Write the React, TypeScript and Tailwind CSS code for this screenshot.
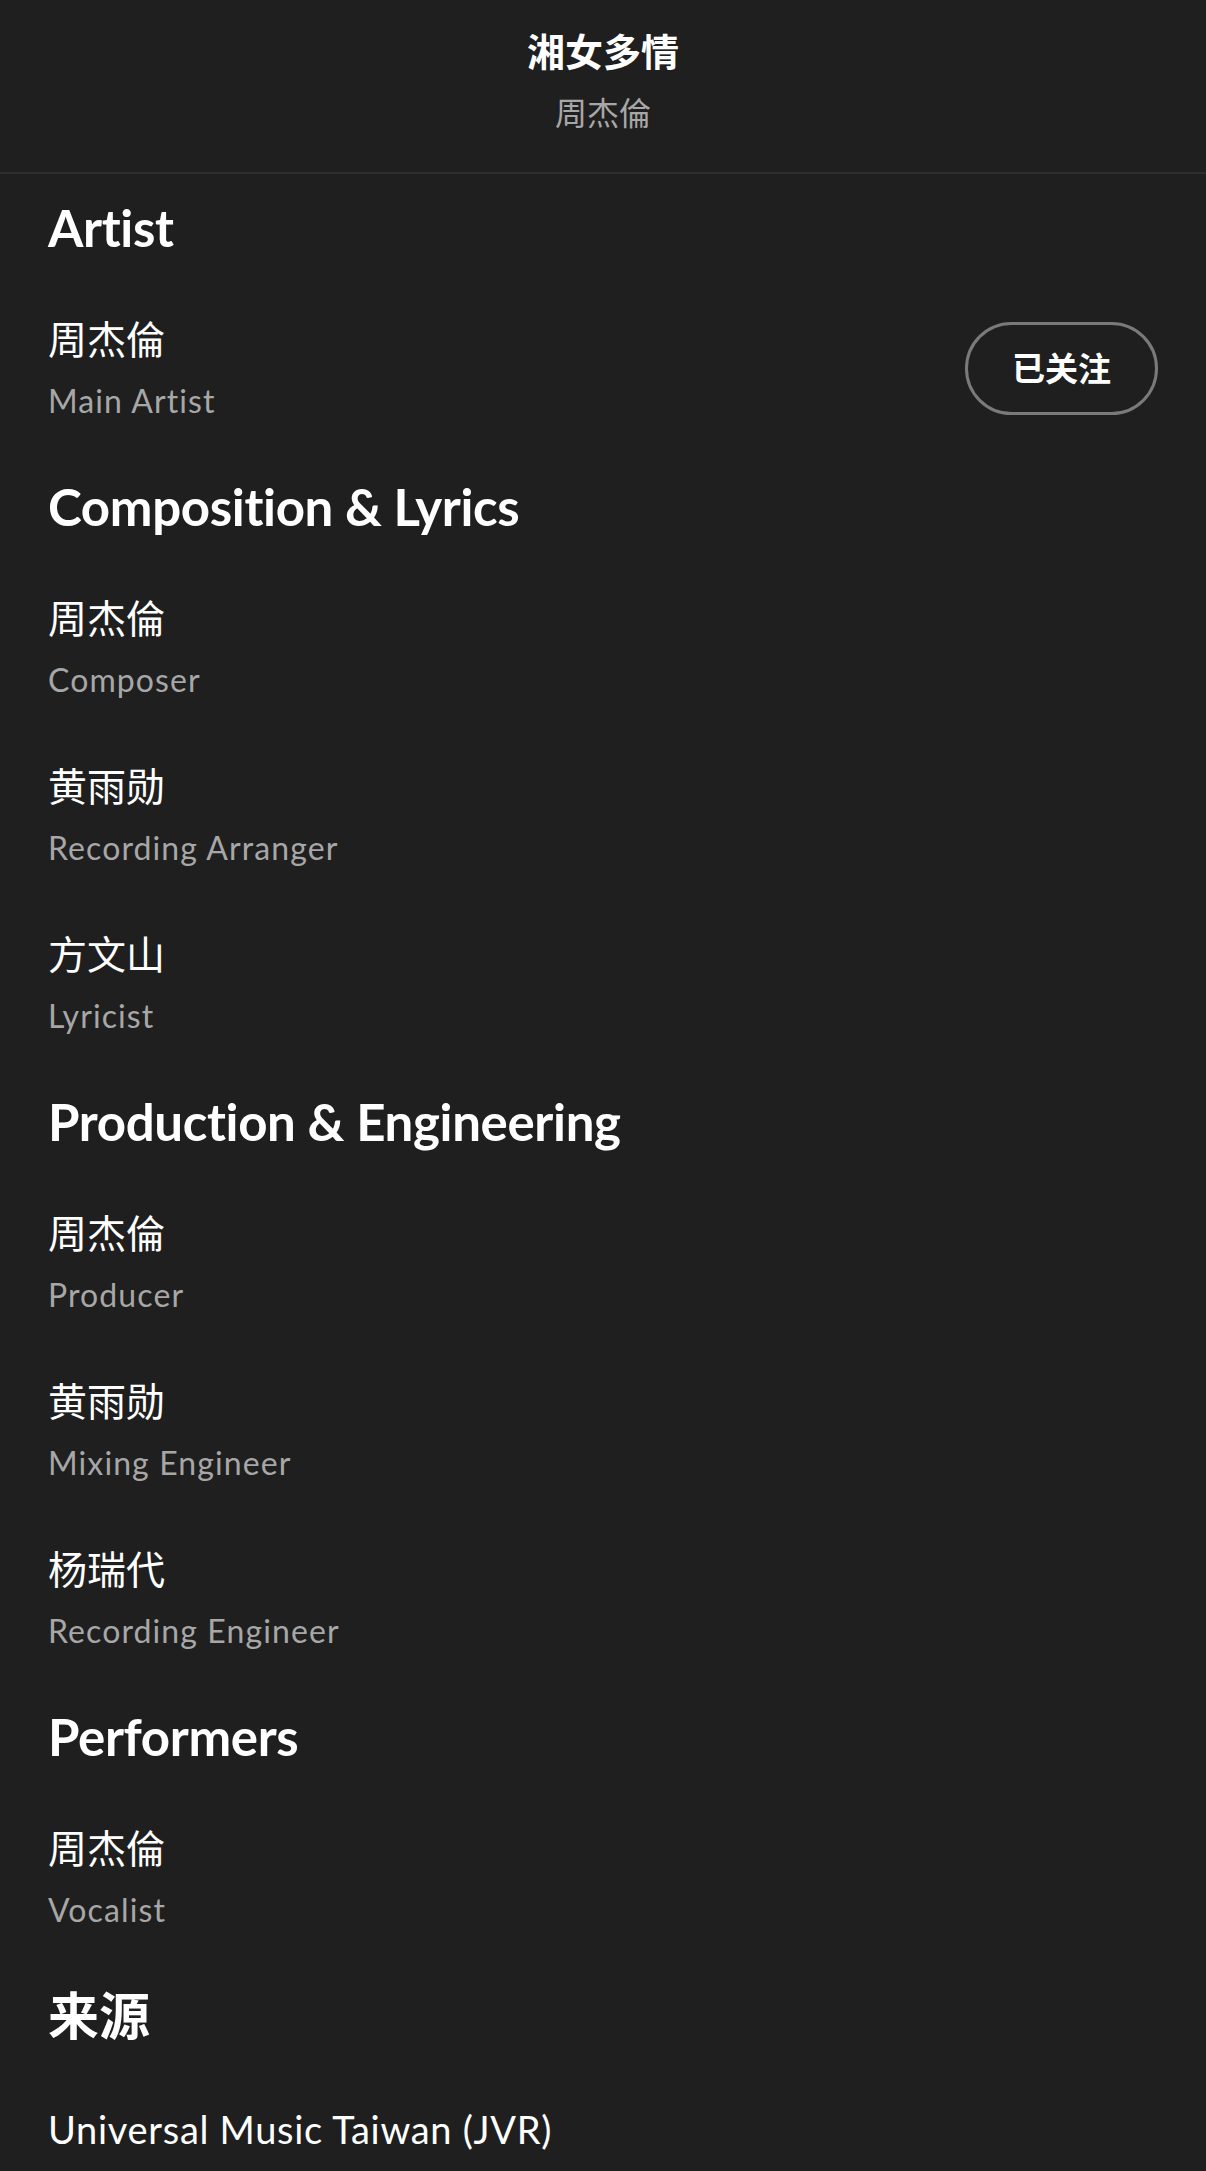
import React from "react";

type Row = { name: string; role: string; follow?: boolean };
type Section = { title: string; rows: Row[] };

const sections: Section[] = [
  { title: "Artist", rows: [{ name: "周杰倫", role: "Main Artist", follow: true }] },
  {
    title: "Composition & Lyrics",
    rows: [
      { name: "周杰倫", role: "Composer" },
      { name: "黄雨勋", role: "Recording Arranger" },
      { name: "方文山", role: "Lyricist" },
    ],
  },
  {
    title: "Production & Engineering",
    rows: [
      { name: "周杰倫", role: "Producer" },
      { name: "黄雨勋", role: "Mixing Engineer" },
      { name: "杨瑞代", role: "Recording Engineer" },
    ],
  },
  { title: "Performers", rows: [{ name: "周杰倫", role: "Vocalist" }] },
];

const font = "font-['Lato','Noto_Sans_CJK_SC',sans-serif]";

export default function App() {
  return (
    <div className={`min-h-[2171px] w-full bg-[#1f1f1f] text-white ${font}`}>
      <header className="flex flex-col items-center border-b-2 border-[#2e2e2e] pt-[27px] pb-[39px]">
        <div className="text-[38px] font-bold leading-[48px]">湘女多情</div>
        <div className="mt-[18px] text-[32px] leading-[40px] text-[#a7a7a7]">周杰倫</div>
      </header>
      <main className="flex flex-col gap-[56px] px-[48px] pt-[24px] pb-[17px]">
        {sections.map((s) => (
          <section key={s.title} className="flex flex-col gap-[57px]">
            <h2 className="text-[51px] font-bold leading-[60px] tracking-[-0.35px]">{s.title}</h2>
            <div className="flex flex-col gap-[62px]">
              {s.rows.map((r, i) => (
                <div key={i} className="flex items-center justify-between">
                  <div className="flex flex-col">
                    <div className="text-[39px] leading-[48px]">{r.name}</div>
                    <div className="mt-[18px] text-[32px] leading-[40px] tracking-[1.1px] text-[#a7a7a7]">{r.role}</div>
                  </div>
                  {r.follow && (
                    <button className="flex h-[93px] w-[193px] items-center justify-center rounded-full border-[3px] border-[#7a7a7a] text-[33px] font-bold leading-none text-white">
                      已关注
                    </button>
                  )}
                </div>
              ))}
            </div>
          </section>
        ))}
        <section className="flex flex-col gap-[59px]">
          <h2 className="text-[51px] font-bold leading-[60px]">来源</h2>
          <div className="text-[38px] leading-[48px] tracking-[0.7px]">Universal Music Taiwan (JVR)</div>
        </section>
      </main>
    </div>
  );
}
